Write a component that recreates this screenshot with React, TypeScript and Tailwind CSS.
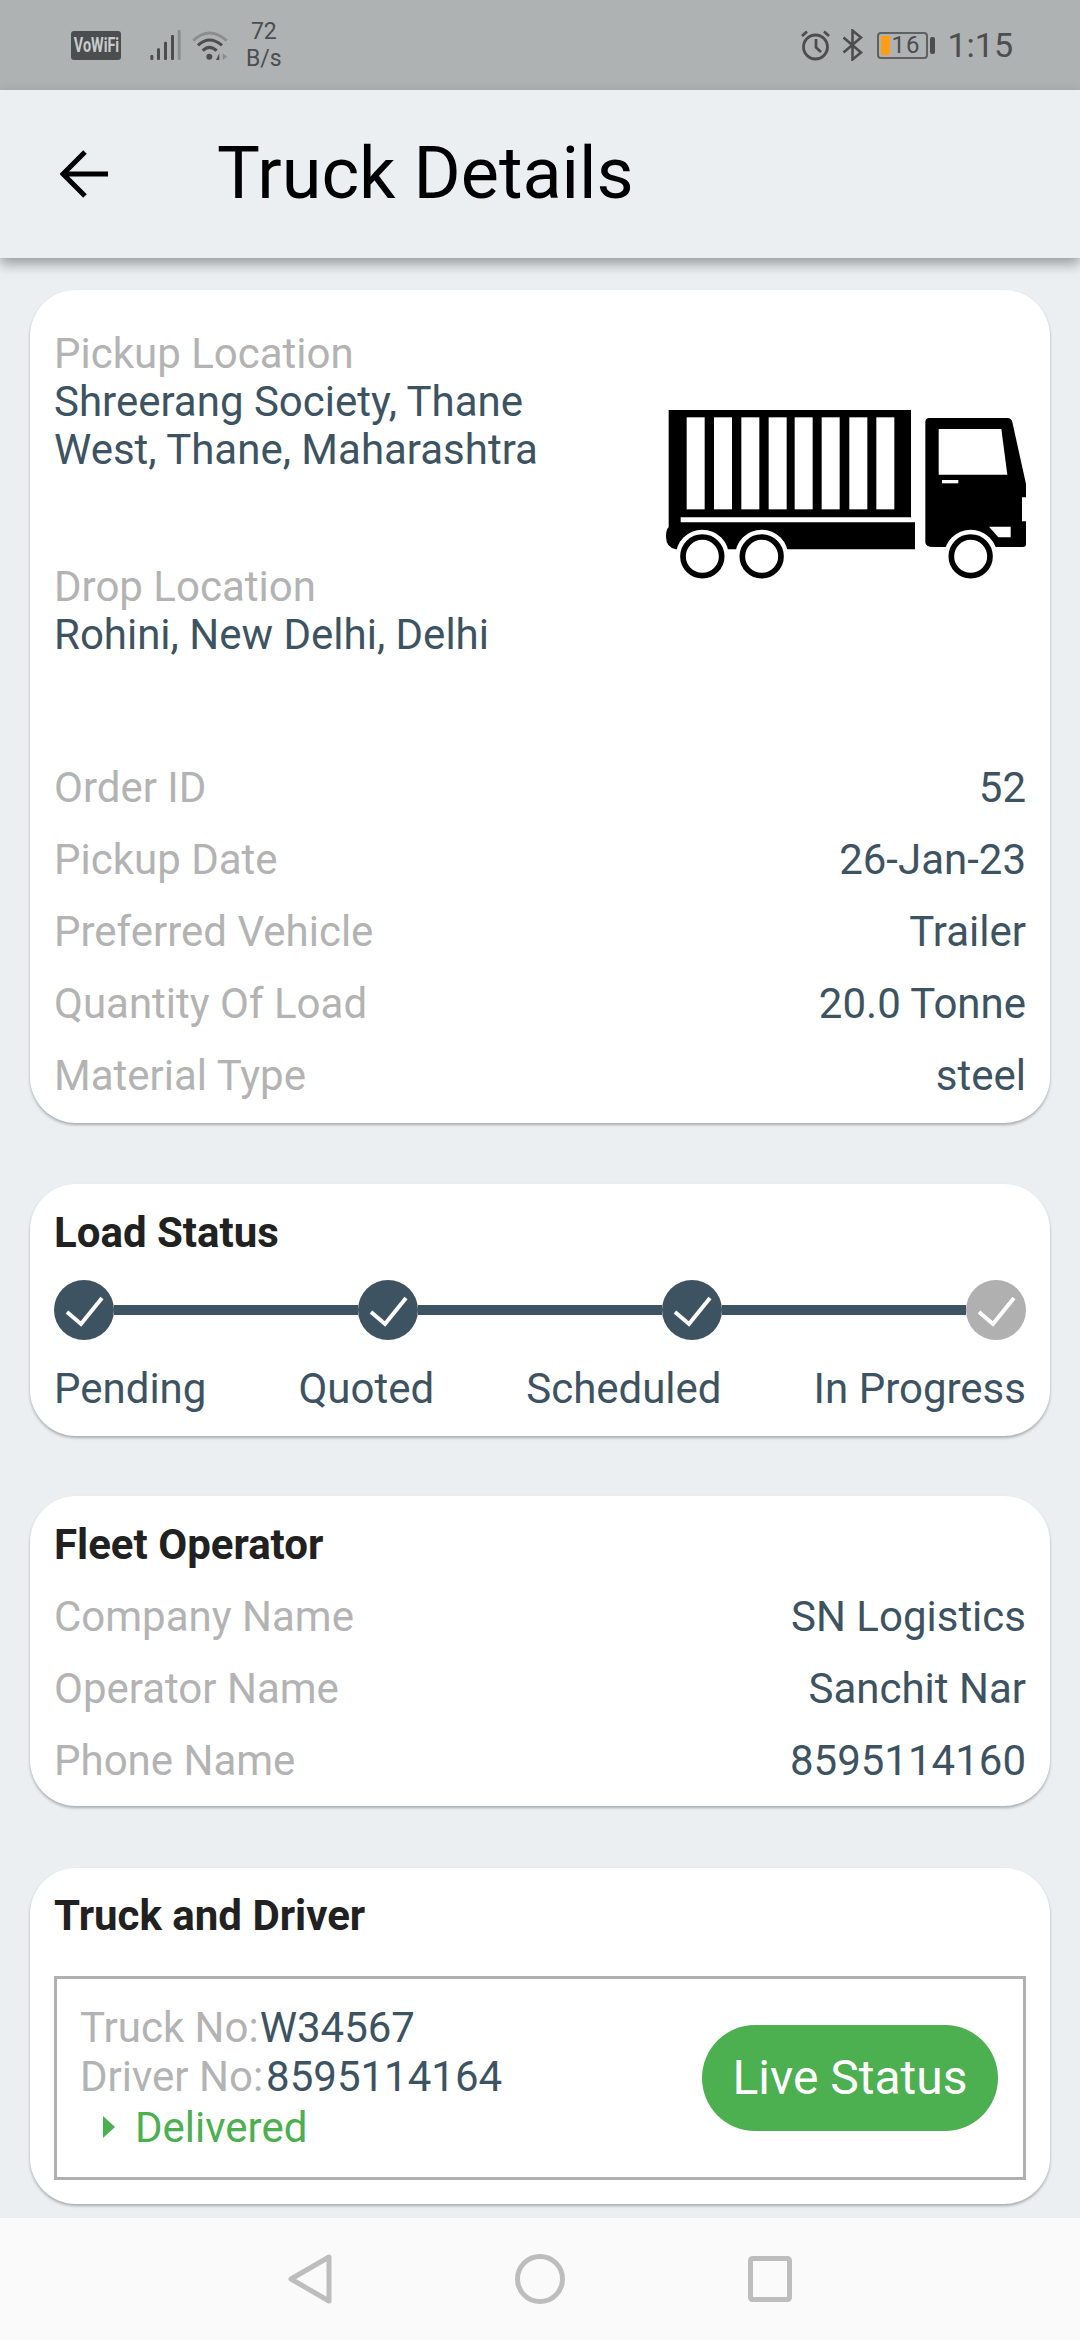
import { ReactNode } from "react";

const rows1 = [
  ["Order ID", "52"],
  ["Pickup Date", "26-Jan-23"],
  ["Preferred Vehicle", "Trailer"],
  ["Quantity Of Load", "20.0 Tonne"],
  ["Material Type", "steel"],
];

const rows2 = [
  ["Company Name", "SN Logistics"],
  ["Operator Name", "Sanchit Nar"],
  ["Phone Name", "8595114160"],
];

function Row({ label, value }: { label: string; value: string }) {
  return (
    <div className="flex h-[72px] items-center justify-between text-[42px] leading-[48px]">
      <span className="text-[#b3b3b3]">{label}</span>
      <span className="text-[#3d5361]">{value}</span>
    </div>
  );
}

function Card({ className, children }: { className: string; children: ReactNode }) {
  return (
    <section className={"rounded-[46px] bg-white px-6 shadow-[0_2px_3px_rgba(0,0,0,0.28)] " + className}>
      {children}
    </section>
  );
}

function Step({ done }: { done: boolean }) {
  return (
    <span className={"flex h-[60px] w-[60px] shrink-0 items-center justify-center rounded-full " + (done ? "bg-[#3d5361]" : "bg-[#b0b0b0]")}>
      <svg width="60" height="60" viewBox="0 0 60 60" fill="none">
        <path d="M13 32 L27 44 L48 18" stroke="white" strokeWidth="4" />
      </svg>
    </span>
  );
}

function TruckIcon() {
  const wheels = [187, 365, 992];
  return (
    <svg width="360" height="169" viewBox="78 88 1080 507" className="mt-[80px] shrink-0">
      {/* container */}
      <path d="M86 88H813V410H122V425H825V506H108Q78 500 78 468Q78 445 86 440Z" fill="black" />
      {[140, 222, 304, 386, 464, 545, 628, 709].map((x) => (
        <rect key={x} x={x} y="110" width="54" height="276" fill="white" />
      ))}
      {/* cab */}
      <path d="M868 112H1102Q1114 112 1117 124L1158 310V350H1146V422H1158V490Q1158 499 1149 499H880Q856 499 856 485V124Q856 112 868 112Z" fill="black" />
      <path d="M896 145H1084L1102 282H896Z" fill="white" />
      <rect x="906" y="298" width="49" height="10" fill="white" />
      <path d="M1047 438H1112V470H1075Z" fill="white" />
      {wheels.map((x) => (
        <g key={x}>
          <circle cx={x} cy="527" r="80" fill="white" />
          <circle cx={x} cy="527" r="58" fill="white" stroke="black" strokeWidth="17" />
        </g>
      ))}
    </svg>
  );
}

function StatusBar() {
  return (
    <header className="flex h-[90px] shrink-0 items-center bg-[#afb2b3] pl-[71px] pr-[67px] text-[#4b4d4e]">
      <span className="flex h-[29px] w-[50px] items-center justify-center overflow-hidden rounded-[3px] bg-[#4b4d4e] text-[#c9cbcc]">
        <span className="scale-x-[0.72] text-[20px] font-bold leading-none">VoWiFi</span>
      </span>
      <svg width="31" height="30" viewBox="435 90 93 90" className="ml-[29px]">
        <rect x="436" y="165" width="9" height="15" rx="3" fill="#4b4d4e" />
        <rect x="456" y="145" width="9" height="35" rx="3" fill="#4b4d4e" />
        <rect x="477" y="125" width="9" height="55" rx="3" fill="#4b4d4e" />
        <rect x="498" y="105" width="9" height="75" rx="3" fill="#4b4d4e" />
        <rect x="518" y="90" width="9" height="90" rx="3" fill="#8b8e8f" />
      </svg>
      <svg width="38" height="30" viewBox="556 90 108 90" fill="none" className="ml-[10px]">
        <path d="M560 122 Q608 76 660 122" stroke="#8b8e8f" strokeWidth="9" />
        <path d="M574 136 Q608 104 646 136" stroke="#4b4d4e" strokeWidth="9" />
        <path d="M588 152 Q608 132 630 152" stroke="#4b4d4e" strokeWidth="9" />
        <circle cx="608" cy="170" r="9" fill="#4b4d4e" />
        <path d="M638 160V180H628Z" fill="#4b4d4e" />
        <path d="M648 160L662 170L648 180Z" fill="#8b8e8f" />
      </svg>
      <span className="ml-[17px] flex flex-col items-center text-[23px] leading-[27px]">
        <span>72</span>
        <span>B/s</span>
      </span>
      <span className="flex-1" />
      <svg width="31" height="32" viewBox="0 0 31 32" fill="none" stroke="#4b4d4e">
        <circle cx="15.5" cy="18" r="12" strokeWidth="2.8" />
        <path d="M16 10V18.5L21 23" strokeWidth="2.8" />
        <path d="M2 7L7 2.5M29 7L24 2.5" strokeWidth="2.8" />
      </svg>
      <svg width="21" height="32" viewBox="0 0 21 32" fill="none" stroke="#4b4d4e" className="ml-[11px]">
        <path d="M1.5 8.5L19 23.5L10.5 30.5V1.5L19 8.5L1.5 23.5" strokeWidth="2.6" />
      </svg>
      <span className="relative ml-[14px] flex h-[27px] w-[51px] items-center rounded-[4px] border-2 border-[#5f6162] pl-[12px] text-[24px] leading-none">
        <span className="absolute left-[2px] top-[2px] h-[19px] w-[9px] bg-[#ff9e16]" />
        <span className="tracking-[1px]">16</span>
      </span>
      <span className="ml-[2px] h-[17px] w-[5px] rounded-[2px] bg-[#4b4d4e]" />
      <span className="ml-[12px] text-[34px] leading-none">1:15</span>
    </header>
  );
}

export default function App() {
  return (
    <div className="flex h-[2340px] w-[1080px] flex-col overflow-hidden bg-[#ebeff2] font-['Roboto',sans-serif]">
      <StatusBar />

      <div className="relative z-10 flex h-[168px] shrink-0 items-center bg-[#ebeff2] pl-[60px] shadow-[0_6px_12px_rgba(0,0,0,0.35)]">
        <svg width="48" height="48" viewBox="0 0 48 48" fill="none" stroke="black" strokeWidth="5">
          <path d="M48 24H3M25 2L3 24L25 46" />
        </svg>
        <h1 className="ml-[109px] text-[72px] font-normal leading-none text-black">Truck Details</h1>
      </div>

      <main className="flex-1 overflow-hidden px-[30px] pt-[32px]">
        <Card className="h-[833px] pt-[40px]">
          <div className="flex justify-between">
            <div className="text-[42px] leading-[48px]">
              <p className="text-[#b3b3b3]">Pickup Location</p>
              <p className="w-[520px] text-[#3d5361]">Shreerang Society, Thane West, Thane, Maharashtra</p>
              <p className="mt-[89px] text-[#b3b3b3]">Drop Location</p>
              <p className="text-[#3d5361]">Rohini, New Delhi, Delhi</p>
            </div>
            <TruckIcon />
          </div>
          <div className="mt-[93px]">
            {rows1.map(([l, v]) => (
              <Row key={l} label={l} value={v} />
            ))}
          </div>
        </Card>

        <Card className="mt-[61px] h-[252px] pt-[25px]">
          <h2 className="text-[42px] font-bold leading-[48px] text-[#212121]">Load Status</h2>
          <div className="mt-[23px] flex items-center">
            <Step done />
            <span className="h-[10px] flex-1 bg-[#3d5361]" />
            <Step done />
            <span className="h-[10px] flex-1 bg-[#3d5361]" />
            <Step done />
            <span className="h-[10px] flex-1 bg-[#3d5361]" />
            <Step done={false} />
          </div>
          <div className="mt-[25px] flex justify-between text-[42px] leading-[48px] text-[#3d5361]">
            <span>Pending</span>
            <span>Quoted</span>
            <span>Scheduled</span>
            <span>In Progress</span>
          </div>
        </Card>

        <Card className="mt-[60px] h-[310px] pt-[25px]">
          <h2 className="mb-[12px] text-[42px] font-bold leading-[48px] text-[#212121]">Fleet Operator</h2>
          {rows2.map(([l, v]) => (
            <Row key={l} label={l} value={v} />
          ))}
        </Card>

        <Card className="mt-[62px] h-[336px] pt-[24px]">
          <h2 className="text-[42px] font-bold leading-[48px] text-[#212121]">Truck and Driver</h2>
          <div className="mt-[36px] flex h-[204px] items-center justify-between border-[3px] border-[#b0b0b0] pl-[23px] pr-[25px]">
            <div className="-mt-[2px] text-[42px] leading-[49px]">
              <p className="text-[#b3b3b3]">Truck No:<span className="ml-px text-[#3d5361]">W34567</span></p>
              <p className="text-[#b3b3b3]">Driver No:<span className="ml-[3px] text-[#3d5361]">8595114164</span></p>
              <p className="mt-[2px] flex items-center text-[#4caf50]">
                <svg width="12" height="22" viewBox="0 0 12 22" className="ml-[23px] mr-[20px]">
                  <path d="M0 0L12 11L0 22Z" fill="#4caf50" />
                </svg>
                Delivered
              </p>
            </div>
            <button className="flex h-[106px] w-[296px] items-center justify-center rounded-[53px] bg-[#4caf50] text-[48px] text-white">
              Live Status
            </button>
          </div>
        </Card>
      </main>

      <nav className="flex h-[122px] shrink-0 items-center justify-center gap-[183px] bg-[#fafafa]">
        <svg width="44" height="50" viewBox="0 0 44 50" fill="none" stroke="#bdbdbd" strokeWidth="5" strokeLinejoin="round">
          <path d="M41 3V47L3 25Z" />
        </svg>
        <svg width="50" height="50" viewBox="0 0 50 50" fill="none" stroke="#bdbdbd" strokeWidth="5">
          <circle cx="25" cy="25" r="22.5" />
        </svg>
        <svg width="44" height="46" viewBox="0 0 44 46" fill="none" stroke="#bdbdbd" strokeWidth="5">
          <rect x="2.5" y="2.5" width="39" height="41" rx="2" />
        </svg>
      </nav>
    </div>
  );
}
